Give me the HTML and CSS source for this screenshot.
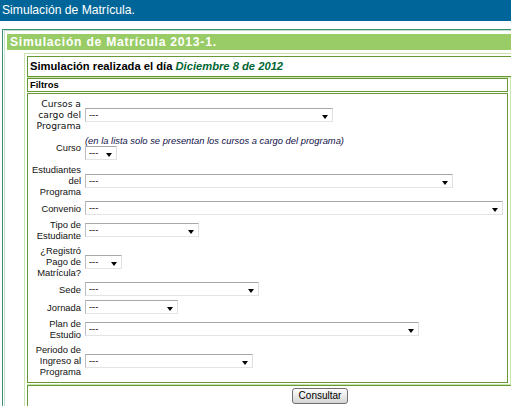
FILE: index.html
```html
<!DOCTYPE html>
<html lang="es">
<head>
  <meta charset="UTF-8">
  <title>Simulación de Matrícula</title>
  <link rel="stylesheet" href="styles.css">
</head>
<body>
  <div class="topbar">Simulación de Matrícula.</div>
  <div class="frame">
    <div class="frame-in">
      <div class="title-bar">Simulación de Matrícula 2013-1.</div>
      <div class="sim">
        <div class="date-row">Simulación realizada el día <em>Diciembre 8 de 2012</em></div>
        <div class="filters">
          <div class="filters-head">Filtros</div>
          <div class="filters-body">
            <div class="form">
              <label class="lbl lbl-wide">Cursos a<br>cargo del<br>Programa</label>
              <div class="ctl"><span class="select"><select class="w247"><option>---</option></select></span></div>

              <label class="lbl">Curso</label>
              <div class="ctl">
                <div class="note">(en la lista solo se presentan los cursos a cargo del programa)</div>
                <span class="select"><select class="w32"><option>---</option></select></span>
              </div>

              <label class="lbl">Estudiantes<br>del<br>Programa</label>
              <div class="ctl"><span class="select"><select class="w368"><option>---</option></select></span></div>

              <label class="lbl">Convenio</label>
              <div class="ctl"><span class="select"><select class="w418"><option>---</option></select></span></div>

              <label class="lbl">Tipo de<br>Estudiante</label>
              <div class="ctl"><span class="select"><select class="w114"><option>---</option></select></span></div>

              <label class="lbl">¿Registró<br>Pago de<br>Matrícula?</label>
              <div class="ctl"><span class="select"><select class="w37"><option>---</option></select></span></div>

              <label class="lbl">Sede</label>
              <div class="ctl"><span class="select"><select class="w174"><option>---</option></select></span></div>

              <label class="lbl">Jornada</label>
              <div class="ctl"><span class="select"><select class="w93"><option>---</option></select></span></div>

              <label class="lbl">Plan de<br>Estudio</label>
              <div class="ctl"><span class="select"><select class="w334"><option>---</option></select></span></div>

              <label class="lbl">Periodo de<br>Ingreso al<br>Programa</label>
              <div class="ctl"><span class="select"><select class="w168"><option>---</option></select></span></div>
            </div>
          </div>
        </div>
        <div class="actions">
          <button class="btn">Consultar</button>
        </div>
      </div>
    </div>
  </div>
</body>
</html>
```

FILE: styles.css
```css
:root {
  --blue: #006699;
  --green: #99cc66;
  --dark: #669933;
  --light: #c9e4ad;
  --teal: #3a8f72;
  --teal-light: #c3e1cd;
}
* { box-sizing: border-box; }
html { overflow: hidden; }
body {
  margin: 0;
  font-family: "Liberation Sans", Arial, sans-serif;
  color: #000;
  background: #fff;
}
.topbar {
  height: 21px;
  line-height: 21px;
  padding-left: 2px;
  background: var(--blue);
  color: #fff;
  font-size: 12.15px;
}
.frame {
  margin: 8px 0 0 2px;
  border-top: 1px solid var(--teal);
  border-left: 1px solid var(--teal);
  padding-left: 1px;
}
.frame-in {
  border-top: 1px solid var(--teal-light);
  border-left: 1px solid var(--teal-light);
  padding: 3px 0 0 2px;
}
.title-bar {
  height: 16px;
  line-height: 16px;
  padding-left: 3px;
  background: var(--green);
  color: #fff;
  font-weight: bold;
  font-size: 12.15px;
  letter-spacing: 0.75px;
}
.sim {
  margin: 3px 0 0 17px;
  border-top: 1px solid var(--light);
  border-left: 1px solid var(--light);
  padding: 2px 0 0 2px;
}
.date-row {
  height: 21px;
  line-height: 19px;
  padding-left: 2px;
  border: 1px solid var(--dark);
  border-right: none;
  font-weight: bold;
  font-size: 11.2px;
}
.date-row em {
  color: #006633;
}
.filters {
  width: 484px;
  border-top: 1px solid var(--light);
  border-right: 1px solid var(--light);
  border-bottom: 1px solid var(--light);
  padding: 0 2px 1px 0;
}
.filters-head {
  height: 14px;
  line-height: 12px;
  padding-left: 2px;
  border: 1px solid var(--dark);
  font-weight: bold;
  font-size: 9.4px;
}
.filters-body {
  margin-top: 1px;
  border: 1px solid var(--dark);
  padding: 4px 0 5px 0;
}
.form {
  display: grid;
  grid-template-columns: 53px max-content;
  column-gap: 4px;
  row-gap: 4px;
  align-items: center;
}
.lbl {
  font-size: 9.4px;
  line-height: 11px;
  text-align: right;
  color: #111;
}
.lbl-wide {
  font-family: "DejaVu Sans", Verdana, sans-serif;
  font-size: 9.2px;
}
.ctl {
  display: flex;
  flex-direction: column;
  align-items: flex-start;
}
.note {
  font-size: 9.4px;
  line-height: 11px;
  font-style: italic;
  color: #10104a;
}
.select {
  position: relative;
  display: block;
}
.select select {
  display: block;
  appearance: none;
  -webkit-appearance: none;
  height: 14px;
  margin: 0;
  padding: 0 0 0 3px;
  border: 1px solid;
  border-color: #a9a9a9 #e0e0e0 #e4e4e4 #bcbcbc;
  border-radius: 0;
  background: #fff;
  color: #000;
  font-family: "Liberation Sans", Arial, sans-serif;
  font-size: 9.4px;
  line-height: 12px;
}
.select::after {
  content: "";
  position: absolute;
  right: 5px;
  top: 7px;
  border-left: 3px solid transparent;
  border-right: 3px solid transparent;
  border-top: 4px solid #000;
}
.w32 { width: 32px; }
.w37 { width: 37px; }
.w93 { width: 93px; }
.w114 { width: 114px; }
.w168 { width: 168px; }
.w174 { width: 174px; }
.w247 { width: 248px; }
.w334 { width: 334px; }
.w368 { width: 368px; }
.w418 { width: 418px; }
.actions {
  height: 40px;
  border-top: 1px solid var(--dark);
  border-left: 1px solid var(--dark);
  padding: 2px 0 0 264px;
}
.btn {
  display: block;
  width: 56px;
  height: 16px;
  padding: 0;
  border: 1px solid #6f6f6f;
  border-radius: 3px;
  background: linear-gradient(#fdfdfd, #e6e6e6 60%, #d4d4d4);
  color: #000;
  font-family: "Liberation Sans", Arial, sans-serif;
  font-size: 10px;
  line-height: 14px;
}
```
